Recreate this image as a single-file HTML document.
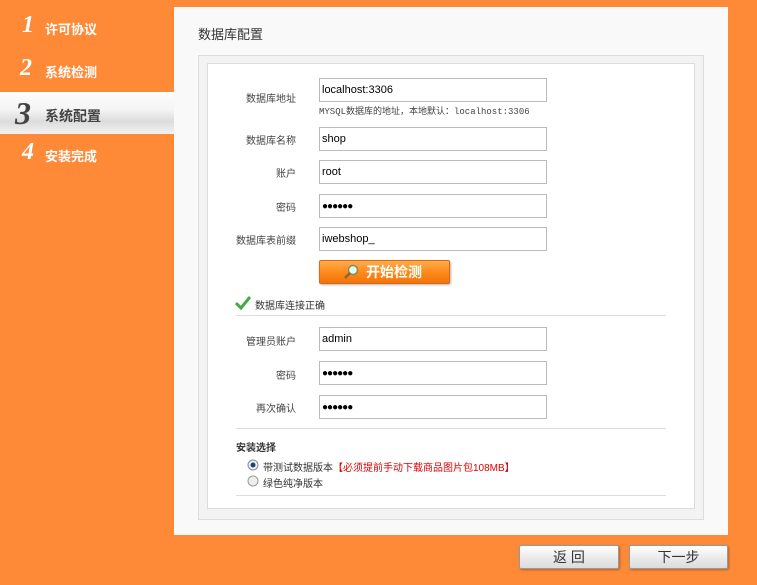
<!DOCTYPE html>
<html><head><meta charset="utf-8"><style>
*{margin:0;padding:0;box-sizing:border-box}
body{width:757px;height:585px;background:#fe8a38;font-family:"Liberation Sans","Noto Sans CJK SC",sans-serif;font-size:12px;color:#333;position:relative;overflow:hidden}
.a{position:absolute}
.side{font-size:13px;color:#fff;font-weight:bold}
.num{font-family:"Liberation Serif",serif;font-style:italic;font-weight:bold;font-size:24px;color:#fff}
.lbl{position:absolute;width:100px;left:196px;text-align:right;font-size:10px;color:#444}
.inp{position:absolute;left:319px;width:228px;height:24px;border:1px solid #bbb;background:#fff;font-size:11px;color:#000;padding:5px 0 0 2px}
.dots{font-size:10px;padding-top:6px;letter-spacing:-1px}
.sep{position:absolute;left:236px;width:430px;height:1px;background:#ddd}
.btn{position:absolute;top:545px;height:24px;border:1px solid #999;border-radius:2px;background:linear-gradient(#fff,#ececec 50%,#dcdcdc);text-align:center;font-size:14px;line-height:22px;color:#333;box-shadow:1px 1px 2px rgba(0,0,0,.3)}
</style></head><body>
<div class="a num" style="left:22px;top:12px">1</div><div class="a side" style="left:45px;top:19px">许可协议</div>
<div class="a num" style="left:20px;top:55px">2</div><div class="a side" style="left:45px;top:62px">系统检测</div>
<div class="a" style="left:0;top:92px;width:174px;height:42px;background:linear-gradient(#fdfdfd,#f5f5f5 40%,#dcdcdc 70%,#f2f2f2)"></div>
<div class="a num" style="left:15px;top:95px;font-size:32px;color:#444">3</div><div class="a side" style="left:45px;top:106px;color:#444;font-size:14px">系统配置</div>
<div class="a num" style="left:22px;top:139px">4</div><div class="a side" style="left:45px;top:146px">安装完成</div>

<div class="a" style="left:174px;top:7px;width:554px;height:528px;background:#f9f9f9"></div>
<div class="a" style="left:198px;top:24px;font-size:13px;color:#333">数据库配置</div>
<div class="a" style="left:198px;top:55px;width:506px;height:465px;border:1px solid #ddd;background:#f3f3f3"></div>
<div class="a" style="left:207px;top:63px;width:488px;height:446px;border:1px solid #ddd;background:#fff"></div>

<div class="lbl" style="top:90px">数据库地址</div>
<div class="inp" style="top:78px">localhost:3306</div>
<div class="a" style="left:319px;top:104px;font-family:'Liberation Mono','Noto Sans CJK SC',monospace;font-size:9px;color:#444">MYSQL数据库的地址，本地默认：localhost:3306</div>
<div class="lbl" style="top:132px">数据库名称</div><div class="inp" style="top:127px">shop</div>
<div class="lbl" style="top:165px">账户</div><div class="inp" style="top:160px">root</div>
<div class="lbl" style="top:199px">密码</div><div class="inp dots" style="top:194px">●●●●●●</div>
<div class="lbl" style="top:232px">数据库表前缀</div><div class="inp" style="top:227px">iwebshop_</div>
<div class="a" style="left:319px;top:260px;width:131px;height:24px;border:1px solid #d96a10;border-radius:2px;background:linear-gradient(#ffab4d,#ff8a1c 50%,#f27408);color:#fff;font-size:14px;font-weight:bold;line-height:22px;padding-left:46px;box-shadow:1px 1px 2px rgba(0,0,0,.3)">开始检测</div>
<svg class="a" style="left:343px;top:264px" width="16" height="16"><circle cx="10" cy="6" r="4.5" fill="#dfe" stroke="#886" stroke-width="1.5"/><path d="M7 9 L2 14" stroke="#863" stroke-width="2.5"/></svg>
<svg class="a" style="left:235px;top:295px" width="16" height="16"><path d="M1 8 L6 13 L15 2" stroke="#4a4" stroke-width="3" fill="none"/></svg>
<div class="a" style="left:255px;top:297px;font-size:10px;color:#333">数据库连接正确</div>
<div class="sep" style="top:315px"></div>
<div class="lbl" style="top:333px">管理员账户</div><div class="inp" style="top:327px">admin</div>
<div class="lbl" style="top:367px">密码</div><div class="inp dots" style="top:361px">●●●●●●</div>
<div class="lbl" style="top:400px">再次确认</div><div class="inp dots" style="top:395px">●●●●●●</div>
<div class="sep" style="top:428px"></div>
<div class="a" style="left:236px;top:439px;font-size:10px;font-weight:bold;color:#333">安装选择</div>
<svg class="a" style="left:247px;top:459px" width="12" height="12"><circle cx="6" cy="6" r="5" fill="#eef" stroke="#889"/><circle cx="6" cy="6" r="2.5" fill="#246"/></svg>
<div class="a" style="left:263px;top:459px;font-size:10px;color:#333">带测试数据版本<span style="color:#d00">【必须提前手动下载商品图片包108MB】</span></div>
<svg class="a" style="left:247px;top:475px" width="12" height="12"><circle cx="6" cy="6" r="5" fill="#eee" stroke="#999"/></svg>
<div class="a" style="left:263px;top:475px;font-size:10px;color:#333">绿色纯净版本</div>
<div class="sep" style="top:495px"></div>

<div class="btn" style="left:519px;width:100px">返 回</div>
<div class="btn" style="left:629px;width:99px">下一步</div>
</body></html>
